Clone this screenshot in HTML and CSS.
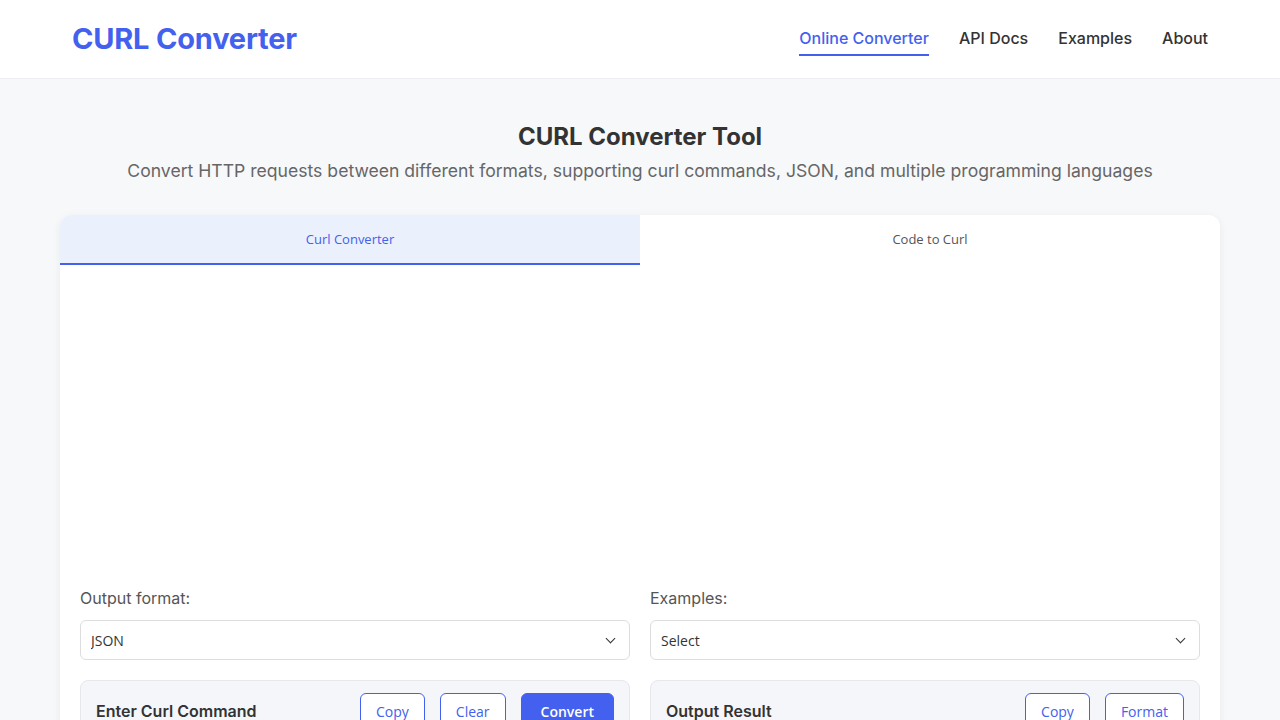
FILE: index.html
```html
<!DOCTYPE html>
<html lang="en">
  <head>
    <meta charset="UTF-8" />
    <meta name="viewport" content="width=device-width, initial-scale=1" />
    <title>CURL Converter</title>
    <link rel="stylesheet" href="styles.css">
  </head>
  <body>
    <header class="site-header">
      <a class="logo" href="#">CURL Converter</a>
      <nav class="nav">
        <a href="#" class="active">Online Converter</a>
        <a href="#">API Docs</a>
        <a href="#">Examples</a>
        <a href="#">About</a>
      </nav>
    </header>

    <main class="main">
      <section class="intro">
        <h1>CURL Converter Tool</h1>
        <p>Convert HTTP requests between different formats, supporting curl commands, JSON, and multiple programming languages</p>
      </section>

      <div class="card">
        <div class="tabs">
          <button class="tab active" type="button">Curl Converter</button>
          <button class="tab" type="button">Code to Curl</button>
        </div>

        <div class="tab-body">
          <div class="ad-space"></div>

          <div class="columns">
            <div class="field">
              <label for="format">Output format:</label>
              <div class="select-wrap">
                <select id="format">
                  <option>JSON</option>
                  <option>Python</option>
                  <option>JavaScript</option>
                </select>
              </div>
            </div>
            <div class="field">
              <label for="example">Examples:</label>
              <div class="select-wrap">
                <select id="example">
                  <option>Select</option>
                  <option>GET request</option>
                  <option>POST JSON</option>
                </select>
              </div>
            </div>

            <div class="panel">
              <div class="panel-head">
                <h2>Enter Curl Command</h2>
                <div class="actions">
                  <button class="btn" type="button">Copy</button>
                  <button class="btn" type="button">Clear</button>
                  <button class="btn primary" type="button">Convert</button>
                </div>
              </div>
            </div>
            <div class="panel">
              <div class="panel-head">
                <h2>Output Result</h2>
                <div class="actions">
                  <button class="btn" type="button">Copy</button>
                  <button class="btn" type="button">Format</button>
                </div>
              </div>
            </div>
          </div>
        </div>
      </div>
    </main>
  </body>
</html>
```

FILE: styles.css
```css
:root {
  --clr-primary: #4361ee;
  --clr-primary-soft: #ebf0fd;
  --clr-bg: #f7f8fa;
  --clr-text: #333;
  --clr-muted: #666;
  --clr-border: #e0e0e0;
  --font-main: Inter, "Noto Sans", sans-serif;
  --font-ui: "Open Sans", "Noto Sans", sans-serif;
}

* {
  box-sizing: border-box;
}

body {
  margin: 0;
  background: var(--clr-bg);
  color: var(--clr-text);
  font-family: var(--font-main);
}

a {
  text-decoration: none;
}

/* Header */
.site-header {
  height: 79px;
  background: #fff;
  border-bottom: 1px solid #eceef1;
  display: flex;
  align-items: center;
  justify-content: space-between;
  padding: 0 72px 2px;
}

.logo {
  color: var(--clr-primary);
  font-size: 29px;
  font-weight: 700;
  letter-spacing: -0.2px;
}

.nav {
  display: flex;
  gap: 30px;
}

.nav a {
  color: var(--clr-text);
  font-size: 16px;
  font-weight: 500;
  padding: 8px 0 6px;
  border-bottom: 2px solid transparent;
}

.nav a.active {
  color: var(--clr-primary);
  border-bottom-color: var(--clr-primary);
}

/* Intro */
.main {
  padding: 0 60px;
}

.intro {
  text-align: center;
  padding: 42px 0 32px;
}

.intro h1 {
  margin: 0 0 6px;
  font-size: 24px;
  font-weight: 700;
  line-height: 32px;
}

.intro p {
  margin: 0;
  color: var(--clr-muted);
  font-size: 17.6px;
  line-height: 24px;
}

/* Card and tabs */
.card {
  background: #fff;
  border-radius: 12px;
  box-shadow: 0 2px 10px rgb(0 0 0 / 0.06);
  overflow: hidden;
}

.tabs {
  display: flex;
  border-bottom: 1px solid #ddd;
}

.tab {
  flex: 1;
  height: 50px;
  border: 0;
  border-bottom: 2px solid transparent;
  margin-bottom: -1px;
  background: #fff;
  color: #555;
  font-family: var(--font-ui);
  font-size: 13px;
  cursor: pointer;
}

.tab.active {
  background: var(--clr-primary-soft);
  color: var(--clr-primary);
  border-bottom-color: var(--clr-primary);
}

.tab-body {
  padding: 0 20px 20px;
}

.ad-space {
  height: 323px;
}

.columns {
  display: grid;
  grid-template-columns: 1fr 1fr;
  column-gap: 20px;
  row-gap: 20px;
}

.field label {
  display: block;
  color: #555;
  font-size: 16px;
  line-height: 20px;
  margin-bottom: 12px;
}

.select-wrap {
  position: relative;
}

.select-wrap::after {
  content: "";
  position: absolute;
  right: 16px;
  top: 15px;
  width: 6px;
  height: 6px;
  border-right: 1.5px solid #333;
  border-bottom: 1.5px solid #333;
  transform: rotate(45deg);
  pointer-events: none;
}

select {
  appearance: none;
  width: 100%;
  height: 40px;
  padding: 0 10px;
  border: 1px solid #ddd;
  border-radius: 6px;
  background: #fff;
  color: #333;
  font-family: var(--font-ui);
  font-size: 14px;
}

/* Panels */
.panel {
  background: #f5f6fa;
  border: 1px solid #e6e8ec;
  border-radius: 8px;
  min-height: 200px;
}

.panel-head {
  display: flex;
  align-items: center;
  justify-content: space-between;
  padding: 12px 15px;
}

.panel-head h2 {
  margin: 0;
  font-size: 16px;
  font-weight: 600;
}

.actions {
  display: flex;
  gap: 15px;
}

.btn {
  height: 36px;
  padding: 0 15px;
  border: 1px solid var(--clr-primary);
  border-radius: 6px;
  background: #fff;
  color: var(--clr-primary);
  font-family: var(--font-ui);
  font-size: 14px;
  cursor: pointer;
}

.btn.primary {
  background: var(--clr-primary);
  color: #fff;
  font-weight: 600;
  padding: 0 19px;
}
```
